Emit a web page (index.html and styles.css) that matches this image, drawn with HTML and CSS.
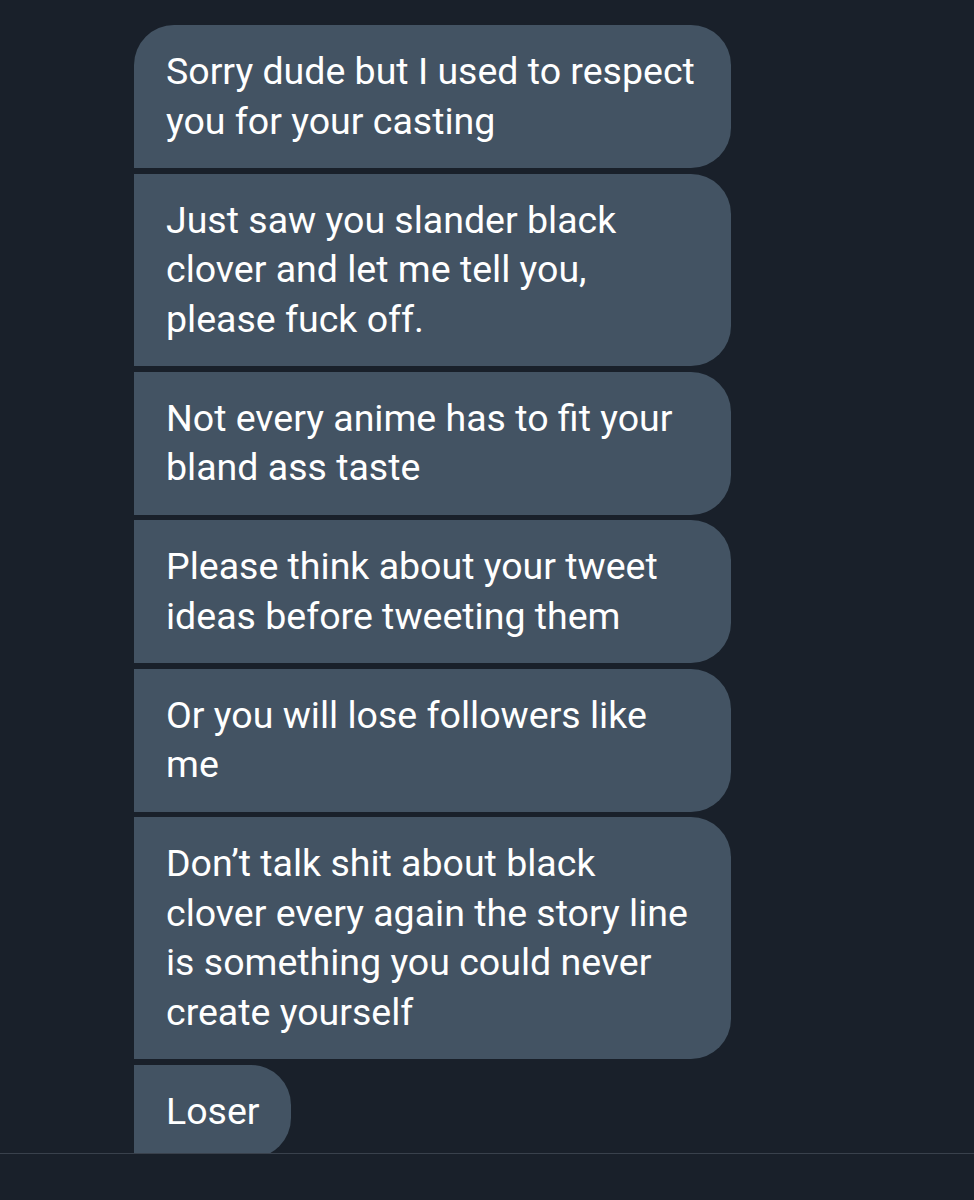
FILE: index.html
```html
<!DOCTYPE html>
<html>
<head>
<meta charset="utf-8">
<link rel="stylesheet" href="styles.css">
</head>
<body>
<div class="screen">
  <div class="thread">
    <div class="bubble first">Sorry dude but I used to respect<br>you for your casting</div>
    <div class="bubble">Just saw you slander black<br>clover and let me tell you,<br>please fuck off.</div>
    <div class="bubble">Not every anime has to fit your<br>bland ass taste</div>
    <div class="bubble">Please think about your tweet<br>ideas before tweeting them</div>
    <div class="bubble">Or you will lose followers like<br>me</div>
    <div class="bubble">Don’t talk shit about black<br>clover every again the story line<br>is something you could never<br>create yourself</div>
    <div class="bubble short">Loser</div>
  </div>
  <div class="composer"></div>
</div>
</body>
</html>
```

FILE: styles.css
```css
html, body {
  margin: 0;
  padding: 0;
  background: #19202a;
}
.screen {
  width: 974px;
  height: 1200px;
  overflow: hidden;
  display: flex;
  flex-direction: column;
  background: #19202a;
}
.thread {
  height: 1153px;
  overflow: hidden;
  padding: 25px 0 0 134px;
  box-sizing: border-box;
  display: flex;
  flex-direction: column;
  align-items: flex-start;
  gap: 5.5px;
}
.bubble {
  width: 597px;
  box-sizing: border-box;
  flex-shrink: 0;
  background: #435363;
  color: #ffffff;
  font-family: Roboto, "Liberation Sans", sans-serif;
  font-size: 37.5px;
  line-height: 49.5px;
  padding: 22px 20px 22px 32px;
  white-space: nowrap;
  border-radius: 0 40px 40px 0;
}
.bubble.first {
  border-radius: 40px 40px 40px 0;
}
.bubble.short {
  width: auto;
  padding-right: 31px;
}
.composer {
  border-top: 1.5px solid #39414c;
  flex: 1;
  background: #19202a;
}
```
